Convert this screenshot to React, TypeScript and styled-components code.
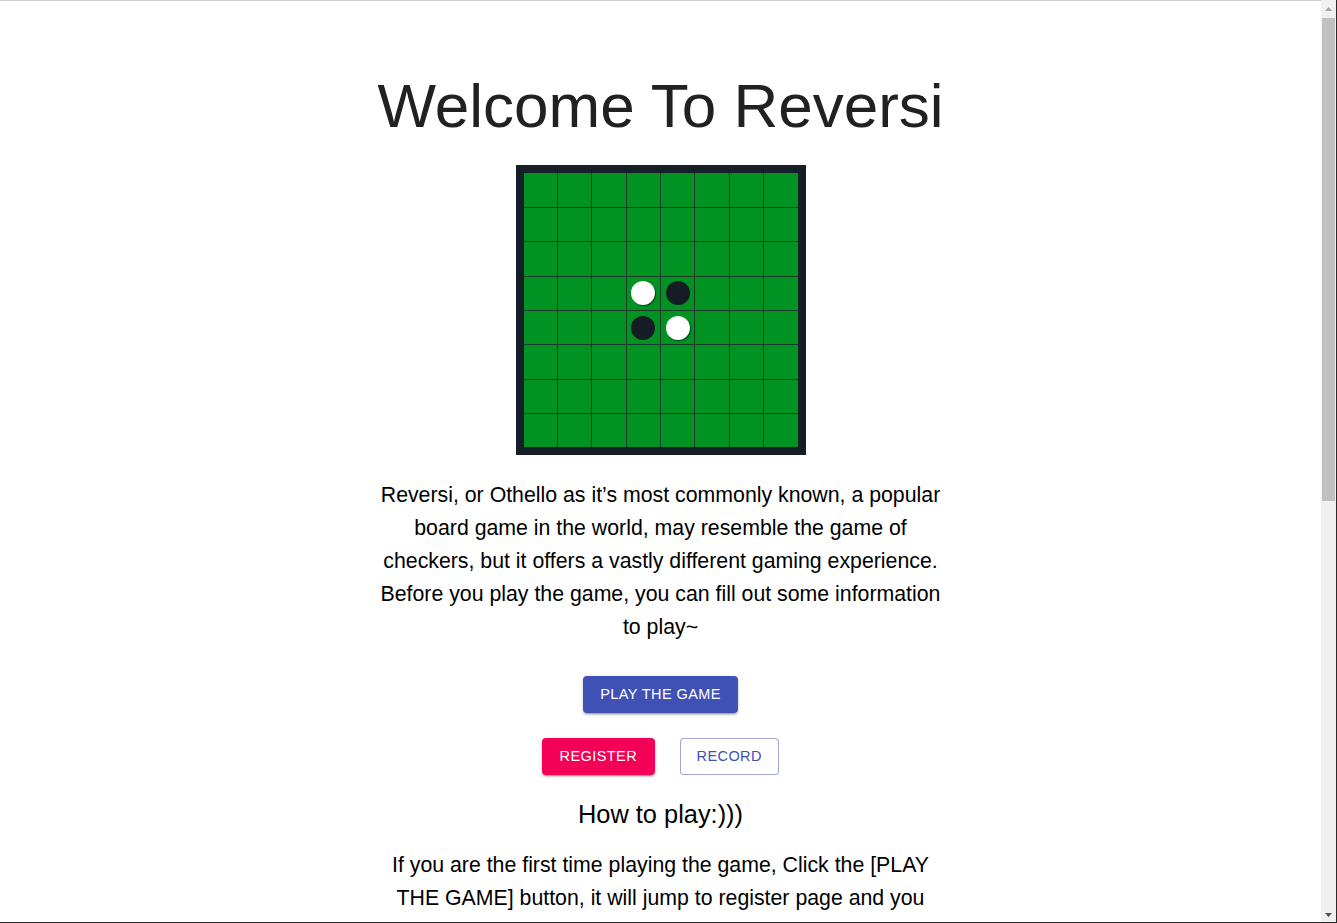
import React from "react";
import styled, { createGlobalStyle } from "styled-components";

const GlobalStyle = createGlobalStyle`
  html, body { margin: 0; padding: 0; background: #fff; }
  body {
    font-family: "Liberation Sans", Arial, Helvetica, sans-serif;
    color: #000;
    border-top: 1px solid #d0d0d0;
    padding-right: 16px;
  }
`;

const Page = styled.main`
  display: flex;
  flex-direction: column;
  align-items: center;
  padding: 68px 0 120px;
`;

const Title = styled.h1`
  margin: 0 0 22px;
  font-size: 62px;
  font-weight: 400;
  line-height: 1.2;
  color: #212121;
`;

const Board = styled.div`
  width: 290px;
  height: 290px;
  box-sizing: border-box;
  border: 8px solid #161e27;
  background: #1d3a26;
  display: grid;
  grid-template-columns: repeat(8, 1fr);
  grid-template-rows: repeat(8, 1fr);
  gap: 1px;
  margin-bottom: 24px;
`;

const Cell = styled.div`
  background: #019322;
  display: flex;
  align-items: center;
  justify-content: center;
`;

const Piece = styled.div<{ $white: boolean }>`
  width: 24px;
  height: 24px;
  border-radius: 50%;
  background: ${(p) => (p.$white ? "#ffffff" : "#161c24")};
  box-shadow: ${(p) => (p.$white ? "1px 1px 1px rgba(0,0,0,0.55)" : "none")};
`;

const Text = styled.p<{ $gapTop?: number }>`
  margin: ${(p) => p.$gapTop ?? 0}px 0 0;
  width: 572px;
  text-align: center;
  font-size: 21.3px;
  line-height: 33px;
  color: #000;
`;

const Actions = styled.div`
  display: flex;
  flex-direction: column;
  align-items: center;
  gap: 25px;
  margin: 32px 0 23px;
`;

const Row = styled.div`
  display: flex;
  gap: 25px;
`;

const Button = styled.button<{ $variant: "primary" | "secondary" | "outlined" }>`
  font-family: "Liberation Sans", Arial, sans-serif;
  font-size: 14.5px;
  line-height: 25px;
  letter-spacing: 0.02857em;
  text-transform: uppercase;
  border-radius: 4px;
  padding: 6px 17.5px;
  cursor: pointer;
  border: none;
  ${(p) =>
    p.$variant === "outlined"
      ? `background: #fff; color: #3f51b5; border: 1px solid rgba(63,81,181,0.5); padding: 5px 16px;`
      : `color: #fff; background: ${p.$variant === "primary" ? "#3f51b5" : "#f50057"};
         box-shadow: 0 3px 1px -2px rgba(0,0,0,0.2), 0 2px 2px 0 rgba(0,0,0,0.14), 0 1px 5px 0 rgba(0,0,0,0.12);`}
`;

const SubTitle = styled.h2`
  margin: 0 0 18px;
  font-size: 25.4px;
  font-weight: 400;
  line-height: 33px;
  color: #000;
`;

/* Browser chrome overlay: scrollbar + window edge */
const ScrollTrack = styled.div`
  position: fixed;
  top: 0;
  right: 0;
  bottom: 0;
  width: 16px;
  background: #f0f0f0;
  border-right: 1px solid #2b2b2b;
  box-sizing: border-box;
  display: flex;
  flex-direction: column;
  align-items: center;
`;

const ScrollArrow = styled.div`
  height: 17px;
  width: 100%;
  display: flex;
  align-items: center;
  justify-content: center;
`;

const ScrollThumb = styled.div`
  margin: 1px 1px 0 1px;
  align-self: stretch;
  height: 483px;
  background: #c0c0c0;
`;

const Spacer = styled.div`
  flex: 1;
`;

const WindowEdge = styled.div`
  position: fixed;
  left: 0;
  right: 0;
  bottom: 0;
  height: 1px;
  background: #2b2b2b;
`;

const initial: Record<string, boolean> = { "3-3": true, "3-4": false, "4-3": false, "4-4": true };

export default function App() {
  const cells = [];
  for (let r = 0; r < 8; r++) {
    for (let c = 0; c < 8; c++) {
      const key = `${r}-${c}`;
      const v = initial[key];
      cells.push(<Cell key={key}>{v !== undefined && <Piece $white={v} />}</Cell>);
    }
  }
  return (
    <>
      <GlobalStyle />
      <Page>
        <Title>Welcome To Reversi</Title>
        <Board>{cells}</Board>
        <Text>
          Reversi, or Othello as it’s most commonly known, a popular board game in the world, may
          resemble the game of checkers, but it offers a vastly different gaming experience. Before
          you play the game, you can fill out some information to play~
        </Text>
        <Actions>
          <Button $variant="primary">Play the game</Button>
          <Row>
            <Button $variant="secondary">Register</Button>
            <Button $variant="outlined">Record</Button>
          </Row>
        </Actions>
        <SubTitle>How to play:)))</SubTitle>
        <Text>
          If you are the first time playing the game, Click the [PLAY THE GAME] button, it will jump
          to register page and you need to fill out your name and choose your color. If you have
          already registered, click the [REGISTER] button to check your information, and click the
          [RECORD] button to see the records of all the games you have played.
        </Text>
        <Text $gapTop={24}>
          In the game, players take turns placing disks on the board with their assigned color
          facing up. During a play, any disks of the opponent's color that are in a straight line
          and bounded by the disk just placed and another disk of the current player's color are
          turned over to the current player's color. The object of the game is to have the majority
          of disks turned to display your color when the last playable empty square is filled.
        </Text>
        <Text $gapTop={24}>
          Black always moves first. If one player cannot make a valid move, play passes back to the
          other player. When neither player can move, the game ends. Good luck and have fun~
        </Text>
      </Page>
      <ScrollTrack>
        <ScrollArrow>
          <svg width="7" height="4" viewBox="0 0 7 4">
            <path d="M0 4 L3.5 0 L7 4 Z" fill="#a3a3a3" />
          </svg>
        </ScrollArrow>
        <ScrollThumb />
        <Spacer />
        <ScrollArrow>
          <svg width="7" height="4" viewBox="0 0 7 4">
            <path d="M0 0 L7 0 L3.5 4 Z" fill="#505050" />
          </svg>
        </ScrollArrow>
      </ScrollTrack>
      <WindowEdge />
    </>
  );
}
